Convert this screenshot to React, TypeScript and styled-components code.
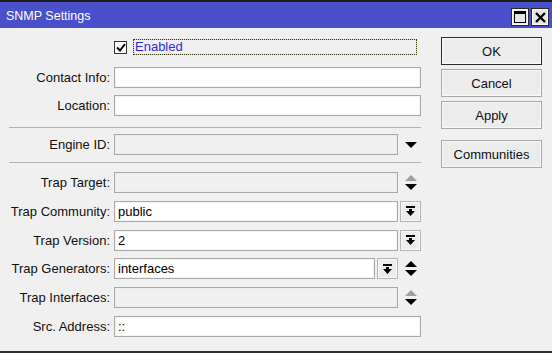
import React from "react";
import styled, { createGlobalStyle } from "styled-components";

const Global = createGlobalStyle`
  html, body {
    margin: 0;
    padding: 0;
    background: #f0f0f0;
  }
  body {
    font-family: "Liberation Sans", Arial, sans-serif;
    font-size: 13px;
    color: #000;
  }
`;

const DownTri = () => (
  <svg width="12" height="6" viewBox="0 0 12 6">
    <path d="M0 0 L12 0 L6 6 Z" fill="#000" />
  </svg>
);

const UpDown = ({ disabled }: { disabled?: boolean }) => (
  <svg width="12" height="15" viewBox="0 0 12 15">
    <path d="M0 6 L6 0 L12 6 Z" fill={disabled ? "#9aa39a" : "#000"} />
    <path d="M0 9 L12 9 L6 15 Z" fill="#000" />
  </svg>
);

const BarDown = () => (
  <svg width="9" height="10" viewBox="0 0 9 10">
    <rect x="0" y="0" width="9" height="2" fill="#000" />
    <path d="M3 3 L6 3 L6 5 L9 5 L4.5 10 L0 5 L3 5 Z" fill="#000" />
  </svg>
);

const App = () => {
  return (
    <>
      <Global />
      <Window>
        <TitleBar>
          <Title>SNMP Settings</Title>
          <TitleButtons>
            <TitleBtn>
              <svg width="12" height="12" viewBox="0 0 12 12">
                <rect x="0.5" y="0.5" width="11" height="11" fill="none" stroke="#000" />
                <rect x="0" y="0" width="12" height="3" fill="#000" />
              </svg>
            </TitleBtn>
            <TitleBtn>
              <svg width="11" height="11" viewBox="0 0 11 11">
                <path d="M1 1 L10 10 M10 1 L1 10" stroke="#000" strokeWidth="2.4" />
              </svg>
            </TitleBtn>
          </TitleButtons>
        </TitleBar>

        <Body>
          <Form>
            <CheckRow>
              <Box>
                <svg width="10" height="9" viewBox="0 0 10 9">
                  <path d="M1 4.5 L4 7.5 L9 1" fill="none" stroke="#000" strokeWidth="2" />
                </svg>
              </Box>
              <Focus>Enabled</Focus>
            </CheckRow>

            <Group $top={12}>
              <Row>
                <Label>Contact Info:</Label>
                <Field><Input /></Field>
              </Row>
              <Row>
                <Label>Location:</Label>
                <Field><Input /></Field>
              </Row>
            </Group>

            <Separator $top={11} />

            <Group $top={6}>
              <Row>
                <Label>Engine ID:</Label>
                <Field>
                  <Input $disabled />
                  <Trail><DownTri /></Trail>
                </Field>
              </Row>
            </Group>

            <Separator $top={7} />

            <Group $top={9} $gap={7.8}>
              <Row>
                <Label>Trap Target:</Label>
                <Field>
                  <Input $disabled />
                  <Trail><UpDown disabled /></Trail>
                </Field>
              </Row>
              <Row>
                <Label>Trap Community:</Label>
                <Field>
                  <Input>public</Input>
                  <SmallBtn><BarDown /></SmallBtn>
                </Field>
              </Row>
              <Row>
                <Label>Trap Version:</Label>
                <Field>
                  <Input>2</Input>
                  <SmallBtn><BarDown /></SmallBtn>
                </Field>
              </Row>
              <Row>
                <Label>Trap Generators:</Label>
                <Field>
                  <Input>interfaces</Input>
                  <SmallBtn><BarDown /></SmallBtn>
                  <Trail><UpDown /></Trail>
                </Field>
              </Row>
              <Row>
                <Label>Trap Interfaces:</Label>
                <Field>
                  <Input $disabled />
                  <Trail><UpDown disabled /></Trail>
                </Field>
              </Row>
              <Row>
                <Label>Src. Address:</Label>
                <Field><Input>::</Input></Field>
              </Row>
            </Group>
          </Form>

          <Buttons>
            <Button $default>OK</Button>
            <Button>Cancel</Button>
            <Button>Apply</Button>
            <Button $top={7}>Communities</Button>
          </Buttons>
        </Body>
      </Window>
    </>
  );
};

export default App;

const Window = styled.div`
  width: 552px;
  height: 353px;
  box-sizing: border-box;
  border-top: 2px solid #1c1c1c;
  border-bottom: 2px solid #2e2e2e;
  background: #f0f0f0;
  display: flex;
  flex-direction: column;
`;

const TitleBar = styled.div`
  height: 26px;
  background: #4a50c9;
  display: flex;
  align-items: center;
  justify-content: space-between;
  padding: 0 3px 0 6px;
`;

const Title = styled.div`
  color: #fff;
  font-size: 12.5px;
  margin-top: 1px;
`;

const TitleButtons = styled.div`
  display: flex;
  gap: 2px;
  margin-top: 4px;
`;

const TitleBtn = styled.div`
  width: 18px;
  height: 18px;
  box-sizing: border-box;
  background: #e6e6e6;
  border: 1px solid #2a2a2a;
  box-shadow: inset 0 0 0 1px #fafafa;
  display: flex;
  align-items: center;
  justify-content: center;
`;

const Body = styled.div`
  display: flex;
  padding: 11px 0 0 9px;
`;

const Form = styled.div`
  width: 412px;
  display: flex;
  flex-direction: column;
`;

const CheckRow = styled.div`
  display: flex;
  align-items: center;
  height: 16px;
  padding-left: 105px;
`;

const Box = styled.div`
  width: 13px;
  height: 13px;
  box-sizing: border-box;
  border: 1px solid #333;
  background: #fff;
  display: flex;
  align-items: center;
  justify-content: center;
  margin-right: 6px;
`;

const Focus = styled.div`
  flex: 1;
  height: 16px;
  box-sizing: border-box;
  margin-right: 4px;
  border: 1px dotted #3a3a10;
  background: linear-gradient(#f0f0f0, #f0f0f0) padding-box, #e4e23a border-box;
  color: #2b2be0;
  line-height: 14px;
  padding-left: 1px;
`;

const Group = styled.div<{ $top: number; $gap?: number }>`
  display: flex;
  flex-direction: column;
  gap: ${(p) => p.$gap ?? 7}px;
  margin-top: ${(p) => p.$top}px;
`;

const Row = styled.div`
  display: flex;
  align-items: center;
  height: 21px;
`;

const Label = styled.div`
  width: 105px;
  box-sizing: border-box;
  padding-right: 4px;
  text-align: right;
  white-space: nowrap;
  color: #111;
`;

const Field = styled.div`
  width: 307px;
  height: 21px;
  display: flex;
  align-items: center;
`;

const Input = styled.div<{ $disabled?: boolean }>`
  flex: 1;
  height: 21px;
  box-sizing: border-box;
  border: 1px solid #a9a9a9;
  box-shadow: inset 0 0 0 1px ${(p) => (p.$disabled ? "#ececec" : "#f4f4f4")};
  background: ${(p) => (p.$disabled ? "#f0f0f0" : "#fff")};
  padding-left: 3px;
  line-height: 19px;
  white-space: nowrap;
`;

const SmallBtn = styled.div`
  width: 21px;
  height: 21px;
  box-sizing: border-box;
  margin-left: 2px;
  border: 1px solid #b4b4b4;
  box-shadow: inset 0 0 0 1px #f8f8f8;
  background: #ececec;
  display: flex;
  align-items: center;
  justify-content: center;
`;

const Trail = styled.div`
  width: 23px;
  height: 21px;
  display: flex;
  align-items: center;
  justify-content: center;
  padding-left: 2px;
  box-sizing: border-box;
`;

const Separator = styled.div<{ $top: number }>`
  height: 1px;
  background: #b2b2b2;
  margin-top: ${(p) => p.$top}px;
`;

const Buttons = styled.div`
  display: flex;
  flex-direction: column;
  gap: 4px;
  margin-left: 20px;
  margin-top: -2px;
`;

const Button = styled.div<{ $default?: boolean; $top?: number }>`
  width: 101px;
  height: 28px;
  box-sizing: border-box;
  margin-top: ${(p) => p.$top ?? 0}px;
  border: 1px solid ${(p) => (p.$default ? "#2b2b2b" : "#a8a8a8")};
  box-shadow: inset 0 0 0 1px #f7f7f7;
  background: #ececec;
  display: flex;
  align-items: center;
  justify-content: center;
  color: #111;
`;
